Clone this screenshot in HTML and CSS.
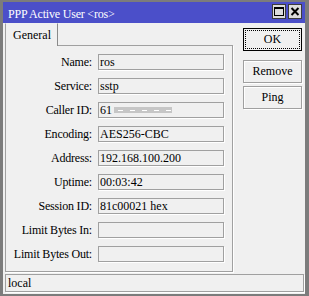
FILE: index.html
```html
<!DOCTYPE html>
<html lang="en">
<head>
  <meta charset="UTF-8">
  <title>PPP Active User</title>
  <link rel="stylesheet" href="styles.css">
</head>
<body>

  <div class="window">
    <div class="titlebar">
      <span class="title">PPP Active User &lt;ros&gt;</span>
      <div class="ctrls">
        <span class="ctrl">
          <svg width="12" height="13" viewBox="0 0 12 13"><rect x="1.5" y="2.5" width="9" height="8" fill="none" stroke="#000"/><rect x="1" y="2" width="10" height="2" fill="#000"/></svg>
        </span>
        <span class="ctrl">
          <svg width="12" height="13" viewBox="0 0 12 13"><path d="M2.5 3 L9.5 10 M9.5 3 L2.5 10" stroke="#000" stroke-width="2"/></svg>
        </span>
      </div>
    </div>

    <div class="body">
      <div class="main">
        <div class="tabs">
          <div class="tab">General</div>
        </div>
        <div class="panel">
          <div class="row"><span class="label">Name:</span><div class="field">ros</div></div>
          <div class="row"><span class="label">Service:</span><div class="field">sstp</div></div>
          <div class="row"><span class="label">Caller ID:</span><div class="field">61<span class="redact"></span></div></div>
          <div class="row"><span class="label">Encoding:</span><div class="field">AES256-CBC</div></div>
          <div class="row"><span class="label">Address:</span><div class="field">192.168.100.200</div></div>
          <div class="row"><span class="label">Uptime:</span><div class="field">00:03:42</div></div>
          <div class="row"><span class="label">Session ID:</span><div class="field">81c00021 hex</div></div>
          <div class="row"><span class="label">Limit Bytes In:</span><div class="field"></div></div>
          <div class="row"><span class="label">Limit Bytes Out:</span><div class="field"></div></div>
        </div>
      </div>

      <div class="buttons">
        <div class="btn default">OK</div>
        <div class="btn spaced">Remove</div>
        <div class="btn">Ping</div>
      </div>
    </div>

    <div class="status">local</div>
  </div>

</body>
</html>
```

FILE: styles.css
```css
body {
  margin: 0;
  font-family: "Liberation Serif", "Times New Roman", serif;
  font-size: 12px;
  color: #000;
  background-color: #f0f0f0;
}
.window {
  width: 309px;
  height: 296px;
  box-sizing: border-box;
  border: 2px solid #7c7c7c;
  border-left-width: 3px;
  border-right-width: 4px;
  background-color: #f0f0f0;
  display: flex;
  flex-direction: column;
}
/* Barra de titulo */
.titlebar {
  height: 21px;
  flex: none;
  background-color: #4b4fc9;
  display: flex;
  justify-content: space-between;
  align-items: flex-start;
}
.title {
  color: #fff;
  line-height: 14px;
  padding: 5px 0 0 5px;
  letter-spacing: -0.2px;
}
.ctrls {
  display: flex;
  gap: 2px;
  margin: 2px 3px 0 0;
}
.ctrl {
  width: 14px;
  height: 15px;
  box-sizing: border-box;
  border: 1px solid #3c3c3c;
  background-color: #dcdcdc;
  display: flex;
  align-items: center;
  justify-content: center;
}
.ctrl svg {
  display: block;
}
.body {
  flex: none;
  height: 249px;
  display: flex;
  padding-left: 2px;
}
.main {
  width: 228px;
  display: flex;
  flex-direction: column;
}
.tabs {
  display: flex;
  height: 22px;
}
.tab {
  width: 53px;
  height: 23px;
  box-sizing: border-box;
  border: 1px solid #a0a0a0;
  border-right-color: #8a8a8a;
  border-bottom: none;
  border-top-color: #f0f0f0;
  background-color: #f0f0f0;
  padding: 4px 0 0 7px;
  line-height: 14px;
  position: relative;
  z-index: 1;
}
.panel {
  height: 227px;
  box-sizing: border-box;
  border: 1px solid #a0a0a0;
  box-shadow: 1px 1px 0 #fff;
  padding: 8px 8px 9px 0;
  display: flex;
  flex-direction: column;
  gap: 8px;
}
.row {
  display: flex;
  gap: 6px;
  height: 16px;
}
.label {
  width: 86px;
  text-align: right;
  line-height: 16px;
  letter-spacing: -0.2px;
  white-space: nowrap;
}
.field {
  width: 126px;
  height: 16px;
  box-sizing: border-box;
  border: 1px solid #a0a0a0;
  box-shadow: 1px 1px 0 #fff;
  padding-left: 1px;
  line-height: 14px;
  white-space: nowrap;
}
/* dato ocultado */
.redact {
  display: inline-block;
  width: 58px;
  height: 6px;
  margin-left: 2px;
  vertical-align: 1px;
  background-color: #c6c6c6;
  background-image: repeating-linear-gradient(90deg, transparent 0 4px, #fff 4px 9px, transparent 9px 12px);
  background-size: 100% 1px;
  background-position: 0 3px;
  background-repeat: no-repeat;
}
.buttons {
  display: flex;
  flex-direction: column;
  margin: 5px 0 0 10px;
  width: 59px;
}
.btn {
  height: 23px;
  box-sizing: border-box;
  margin: 0 0 3px;
  line-height: 21px;
  text-align: center;
  background-color: #f0f0f0;
  border: 1px solid #a0a0a0;
  box-shadow: inset 1px 1px 0 #fff, 1px 1px 0 #fff;
  position: relative;
}
.btn.default {
  border-color: #000;
  margin-bottom: 9px;
  box-shadow: none;
}
.btn.default::before {
  content: "";
  position: absolute;
  inset: 1px;
  border: 1px dotted #000;
}
.status {
  flex: none;
  height: 18px;
  box-sizing: border-box;
  margin: 2px 1px 0 2px;
  border: 1px solid #a0a0a0;
  box-shadow: 1px 1px 0 #fff;
  padding-left: 2px;
  line-height: 16px;
}
```
